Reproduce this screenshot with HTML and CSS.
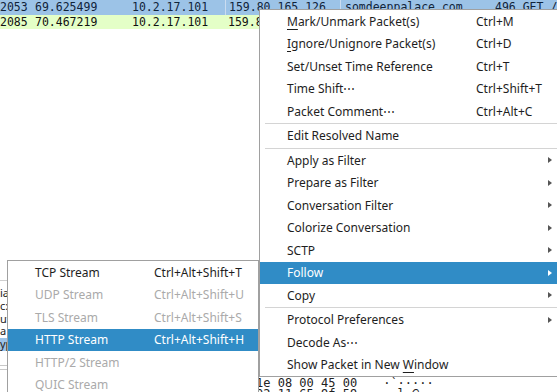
FILE: index.html
```html
<!DOCTYPE html>
<html lang="en">
<head>
    <meta charset="UTF-8">
    <meta name="viewport" content="width=device-width, initial-scale=1.0">
    <title>Packet context menu</title>
    <link rel="stylesheet" href="styles.css">
</head>
<body>

<div class="screen">
    <div class="packet-list">
        <div class="row selected">
            <span>2053</span><span>69.625499</span><span>10.2.17.101</span><span class="dst focus">159.80.165.126</span><span class="host">somdeeppalace.com</span><span>496 GET /</span>
        </div>
        <div class="row http">
            <span>2085</span><span>70.467219</span><span>10.2.17.101</span><span class="dst">159.80.165.126</span><span class="host">somdeeppalace.com</span><span>496 GET /</span>
        </div>
    </div>

    <div class="details">
        <div class="line">ia</div>
        <div class="line">c:h</div>
        <div class="line">ut</div>
        <div class="line">a</div>
        <div class="line picked">yp</div>
    </div>

    <div class="splitter"></div>

    <div class="bytes">
        <div class="line"><span class="hex">1e 08 00 45 00</span><span class="ascii">·`·····</span></div>
        <div class="line"><span class="hex">02 11 65 9f 59</span><span class="ascii">··l·@···</span></div>
    </div>

    <!-- context menu on the selected packet -->
    <div class="menu main-menu">
        <div class="item"><span><u>M</u>ark/Unmark Packet(s)</span><span>Ctrl+M</span></div>
        <div class="item"><span><u>I</u>gnore/Unignore Packet(s)</span><span>Ctrl+D</span></div>
        <div class="item"><span>Set/Unset Time Reference</span><span>Ctrl+T</span></div>
        <div class="item"><span>Time Shift⋯</span><span>Ctrl+Shift+T</span></div>
        <div class="item"><span>Packet Comment⋯</span><span>Ctrl+Alt+C</span></div>
        <div class="sep"></div>
        <div class="item"><span>Edit Resolved Name</span><span></span></div>
        <div class="sep"></div>
        <div class="item"><span>Apply as Filter</span><span></span><i class="arrow"></i></div>
        <div class="item"><span>Prepare as Filter</span><span></span><i class="arrow"></i></div>
        <div class="item"><span>Conversation Filter</span><span></span><i class="arrow"></i></div>
        <div class="item"><span>Colorize Conversation</span><span></span><i class="arrow"></i></div>
        <div class="item"><span>SCTP</span><span></span><i class="arrow"></i></div>
        <div class="item active"><span>Follow</span><span></span><i class="arrow"></i></div>
        <div class="item"><span>Copy</span><span></span><i class="arrow"></i></div>
        <div class="sep"></div>
        <div class="item"><span>Protocol Preferences</span><span></span><i class="arrow"></i></div>
        <div class="item"><span>Decode As⋯</span><span></span></div>
        <div class="item"><span>Show Packet in New <u>W</u>indow</span><span></span></div>
    </div>

    <div class="menu sub-menu">
        <div class="item"><span>TCP Stream</span><span>Ctrl+Alt+Shift+T</span></div>
        <div class="item disabled"><span>UDP Stream</span><span>Ctrl+Alt+Shift+U</span></div>
        <div class="item disabled"><span>TLS Stream</span><span>Ctrl+Alt+Shift+S</span></div>
        <div class="item active"><span>HTTP Stream</span><span>Ctrl+Alt+Shift+H</span></div>
        <div class="item disabled"><span>HTTP/2 Stream</span><span></span></div>
        <div class="item disabled"><span>QUIC Stream</span><span></span></div>
    </div>
</div>

</body>
</html>
```

FILE: styles.css
```css
body {
    margin: 0;
    background-color: #fff;
    font-family: "Noto Sans", "Open Sans", sans-serif;
}
.screen {
    position: relative;
    width: 557px;
    height: 392px;
    overflow: hidden;
}
.packet-list {
    height: 280px;
    font-family: "DejaVu Sans Mono", monospace;
    font-size: 11.5px;
    color: #111;
}
.row {
    display: grid;
    grid-template-columns: 35px 97px 93px 116px 154px 1fr;
    height: 14.5px;
    line-height: 14.5px;
    white-space: nowrap;
}
.row span {
    overflow: hidden;
}
.row.selected {
    background-color: #9cc3e7;
    color: #10243a;
}
.row.http {
    background-color: #e4ffc7;
}
.row .dst {
    padding-left: 3px;
}
.row .host {
    padding-left: 4px;
}
.row .focus {
    border-left: 1px solid #cadcf0;
    border-right: 1px solid #cadcf0;
}
.details {
    border-top: 1px solid #cfcfcf;
    height: 85px;
    padding-top: 6px;
    box-sizing: border-box;
    font-size: 11px;
    color: #222;
}
.details .line {
    height: 12.75px;
    line-height: 12.75px;
    white-space: nowrap;
}
.details .picked {
    background-color: #9cc3e7;
}
.splitter {
    height: 3px;
    border-top: 1px solid #c8c8c8;
    border-bottom: 1px solid #c8c8c8;
}
.bytes {
    padding-top: 8px;
    font-family: "DejaVu Sans Mono", monospace;
    font-size: 12px;
    color: #222;
}
.bytes .line {
    height: 11px;
    line-height: 11px;
    white-space: pre;
}
.bytes .hex {
    margin-left: 256px;
}
.bytes .ascii {
    margin-left: 26px;
}
.menu {
    position: absolute;
    background-color: #fff;
    border: 1px solid #a0a0a0;
    font-size: 12px;
    color: #1e1e1e;
}
.main-menu {
    left: 259px;
    top: 9px;
    width: 310px;
}
.sub-menu {
    left: 7px;
    top: 260px;
    width: 252px;
    box-sizing: border-box;
}
.item {
    display: grid;
    align-items: center;
    height: 22.5px;
    white-space: nowrap;
}
.main-menu .item {
    grid-template-columns: 189px 1fr 12px;
    padding: 0 10px 0 27px;
}
.sub-menu .item {
    grid-template-columns: 119px 1fr;
    padding-left: 27px;
}
.item u {
    text-underline-offset: 3px;
}
.item.active {
    background-color: #308cc6;
    color: #fff;
}
.item.disabled {
    color: #aaa;
}
.sep {
    height: 1px;
    margin: 0.5px 0 0.5px 5px;
    background-color: #d4d4d4;
}
.arrow {
    width: 0;
    height: 0;
    border-left: 4px solid #555;
    border-top: 3.5px solid transparent;
    border-bottom: 3.5px solid transparent;
}
.item.active .arrow {
    border-left-color: #fff;
}
```
